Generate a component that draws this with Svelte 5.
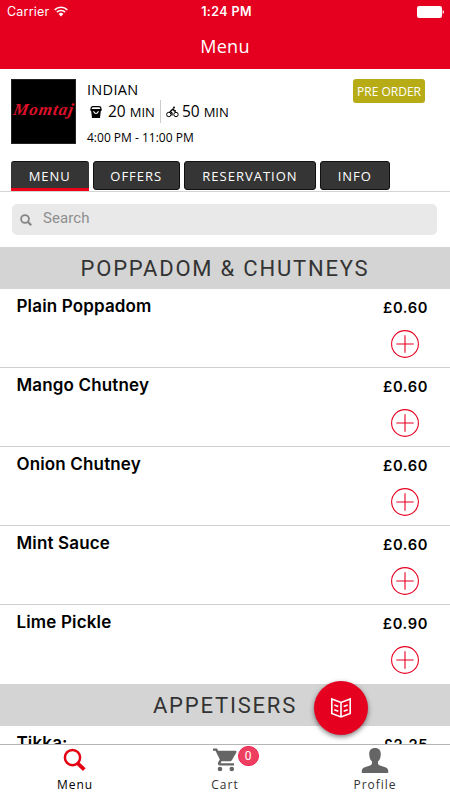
<style>
	:global(body) {
		background: #fff;
		margin: 0;
	}

	.app {
		color: #000;
		display: flex;
		flex-direction: column;
		font-family: "Open Sans", "Noto Sans", sans-serif;
		height: 800px;
		overflow: hidden;
		position: relative;
		width: 450px;
	}

	svg {
		display: block;
	}

	header {
		background: #e50020;
		box-sizing: border-box;
		color: #fff;
		flex: none;
		height: 69px;
	}

	.status {
		align-items: center;
		display: grid;
		font-family: Inter, sans-serif;
		font-size: 12.5px;
		grid-template-columns: 1fr auto 1fr;
		height: 23px;
		padding: 0 6px 0 7px;
	}

	.carrier {
		align-items: center;
		display: flex;
		gap: 5px;
		letter-spacing: 0.2px;
	}

	.clock {
		font-weight: 600;
		letter-spacing: 0.4px;
		padding-left: 2px;
	}

	.battery {
		justify-self: end;
	}

	h1 {
		font-size: 18px;
		font-weight: 400;
		letter-spacing: 0.3px;
		line-height: 24px;
		margin: 11px 0 0;
		text-align: center;
	}

	.restaurant {
		display: flex;
		flex: none;
		height: 82px;
		padding: 10px 25px 0 11px;
	}

	.logo {
		align-items: center;
		background: #000;
		box-shadow: inset 0 0 0 1px #222;
		color: #e0102a;
		display: flex;
		font-family: "Brush Script MT", "Liberation Serif", serif;
		font-size: 17px;
		font-style: italic;
		font-weight: 700;
		height: 65px;
		justify-content: center;
		letter-spacing: 1px;
		line-height: 60px;
		width: 65px;
	}

	.logo span {
		padding-bottom: 3px;
		transform: skewX(-10deg);
	}

	.details {
		flex: 1;
		padding-left: 11px;
	}

	.cuisine {
		font-size: 14.5px;
		letter-spacing: 0.3px;
		line-height: 21px;
	}

	.times {
		align-items: center;
		display: flex;
		font-size: 15.5px;
		height: 23px;
	}

	.times small {
		font-size: 13px;
	}

	.times span {
		margin-top: -1px;
	}

	.collection {
		align-items: center;
		border-right: 1px solid #ccc;
		display: flex;
		gap: 6px;
		height: 23px;
		padding: 0 5px 0 3px;
	}

	.delivery {
		align-items: center;
		display: flex;
		gap: 3px;
		padding-left: 5px;
	}

	.hours {
		font-size: 12px;
		line-height: 16px;
		margin-top: 7px;
	}

	.preorder {
		background: #b7ac16;
		border-radius: 3px;
		color: #fff;
		font-size: 12px;
		height: 24px;
		line-height: 25px;
		text-align: center;
		width: 72px;
	}

	.tabs {
		border-bottom: 1px solid #d4d4d4;
		display: flex;
		flex: none;
		gap: 4px;
		height: 30px;
		padding-left: 11px;
	}

	.tab {
		background: #353535;
		border: 1px solid #111;
		border-radius: 3px;
		box-sizing: border-box;
		color: #fff;
		font-size: 13px;
		height: 29px;
		letter-spacing: 1px;
		line-height: 28px;
		text-align: center;
	}

	.tab.active {
		border-bottom: 3px solid #ee0018;
		border-left: 0;
		border-radius: 3px 3px 0 0;
		border-right: 0;
		height: 30px;
	}

	.search {
		align-items: center;
		background: #e9e9e9;
		border-radius: 5px;
		color: #8e8e8e;
		display: flex;
		flex: none;
		font-family: Roboto, sans-serif;
		font-size: 15px;
		gap: 11px;
		height: 31px;
		letter-spacing: 0.1px;
		margin: 12px 13px 12px 12px;
		padding-left: 8px;
	}

	.search span {
		margin-top: -4px;
	}

	.list {
		flex: 1;
		min-height: 0;
		overflow: hidden;
	}

	h2 {
		background: #d4d4d4;
		color: #333;
		font-family: Roboto, sans-serif;
		font-size: 22px;
		font-weight: 400;
		height: 41.5px;
		letter-spacing: 1.8px;
		line-height: 43px;
		margin: 0;
		text-align: center;
	}

	.item {
		border-bottom: 1px solid #d0d0d0;
		box-sizing: border-box;
		display: flex;
		font-family: Inter, sans-serif;
		height: 79.2px;
		justify-content: space-between;
		padding: 0 22px 0 16.5px;
	}

	.item.last {
		border-bottom: 0;
	}

	.name {
		font-size: 17px;
		font-weight: 600;
		letter-spacing: 0.15px;
		line-height: 34px;
	}

	.buy {
		align-items: flex-end;
		display: flex;
		flex-direction: column;
	}

	.price {
		font-size: 14.7px;
		font-weight: 600;
		letter-spacing: 0.6px;
		line-height: 38px;
	}

	.buy svg {
		margin: 3px 9px 0 0;
	}

	.fab {
		align-items: center;
		background: #e50020;
		border-radius: 50%;
		box-shadow: 0 2px 5px rgba(0, 0, 0, 0.5);
		display: flex;
		height: 54px;
		justify-content: center;
		left: 314px;
		position: absolute;
		top: 681px;
		width: 54px;
	}

	nav {
		background: #fff;
		border-top: 1px solid #b5b5b5;
		box-sizing: border-box;
		display: grid;
		flex: none;
		font-size: 12px;
		grid-template-columns: repeat(3, 1fr);
		height: 56px;
		letter-spacing: 1px;
	}

	.link {
		align-items: center;
		color: #333;
		display: flex;
		flex-direction: column;
		line-height: 16px;
	}

	.link.active {
		color: #000;
	}

	.glyph {
		height: 32px;
		position: relative;
	}

	.badge {
		background: #ef3f60;
		border-radius: 10px;
		box-sizing: border-box;
		border: 1px solid #ee2350;
		color: #fff;
		font-family: Roboto, sans-serif;
		height: 20px;
		left: 24.5px;
		letter-spacing: 0;
		line-height: 18px;
		position: absolute;
		text-align: center;
		top: 0.5px;
		width: 21px;
	}
</style>

<div class="app">
	<header>
		<div class="status">
			<div class="carrier">
				<span>Carrier</span>
				<svg width="14" height="11" viewBox="0 0 14 11" fill="none" stroke="#fff" stroke-width="1.7">
					<path d="M0.7 3.8a9 9 0 0 1 12.6 0M2.9 6.2a5.8 5.8 0 0 1 8.2 0" />
					<path d="M4.6 8a3.5 3.5 0 0 1 4.8 0L7 10.5Z" fill="#fff" stroke="none" />
				</svg>
			</div>
			<span class="clock">1:24 PM</span>
			<svg class="battery" width="27" height="12" viewBox="0 0 27 12" fill="#fff">
				<rect width="25" height="12" rx="2" />
				<path d="M25.7 4q1.3.5 1.3 2t-1.3 2z" />
			</svg>
		</div>
		<h1>Menu</h1>
	</header>

	<div class="restaurant">
		<div class="logo"><span>Momtaj</span></div>
		<div class="details">
			<div class="cuisine">INDIAN</div>
			<div class="times">
				<div class="collection">
					<svg width="12" height="12" viewBox="0 0 12 12">
						<path d="M1 3.5Q1 .7 3 .7h6q2 0 2 2.8" fill="none" stroke="#000" stroke-width="1.2" />
						<path d="M.5 3h11v2h-.7L10 12H2L1.2 5H.5z" />
						<path d="M3.5 5.2q2.5 4.6 5 0" fill="none" stroke="#fff" stroke-width="1.1" />
					</svg>
					<span>20 <small>MIN</small></span>
				</div>
				<div class="delivery">
					<svg width="13" height="12" viewBox="0 0 13 12" fill="none" stroke="#000">
						<circle cx="2.8" cy="8.5" r="2.2" />
						<circle cx="10" cy="8.5" r="2.2" />
						<path d="M6 9.5V7L4.2 5.5 7 3l1.5 2H10" stroke-width="1.3" />
						<circle cx="8" cy="1.5" r="1" fill="#000" stroke="none" />
					</svg>
					<span>50 <small>MIN</small></span>
				</div>
			</div>
			<div class="hours">4:00 PM - 11:00 PM</div>
		</div>
		<div class="preorder">PRE ORDER</div>
	</div>

	<div class="tabs">
		{#each tabs as tab, i}
			<div class="tab" class:active={i === 0} style="width: {tab.width}px">{tab.label}</div>
		{/each}
	</div>

	<div class="search">
		<svg width="12" height="12" viewBox="0 0 12 12" fill="none" stroke="#858585" stroke-width="1.8">
			<circle cx="5" cy="5" r="3.9" />
			<path d="M7.8 7.800l3.400 3.400" stroke-width="2.200" />
		</svg>
		<span>Search</span>
	</div>

	<div class="list">
		{#each sections as section}
			<h2>{section.title}</h2>
			{#each section.items as item, i}
				<div class="item" class:last={i === section.items.length - 1}>
					<span class="name">{item.name}</span>
					<div class="buy">
						<span class="price">£{item.price}</span>
						<svg width="28" height="28" viewBox="0 0 28 28" fill="none" stroke="#e50020" stroke-width="1.1">
							<circle cx="14" cy="14" r="13.4" />
							<path d="M14 5.3v17.4M5.3 14h17.4" />
						</svg>
					</div>
				</div>
			{/each}
		{/each}
	</div>

	<nav>
		<div class="link active">
			<div class="glyph">
				<svg width="24" height="32" viewBox="0 0 24 32" fill="none" stroke="#e50012">
					<circle cx="9.500" cy="12.600" r="7.600" stroke-width="2.500" />
					<path d="M14.500 18.200l6.800 6.500" stroke-width="3.800" />
				</svg>
			</div>
			<span>Menu</span>
		</div>
		<div class="link">
			<div class="glyph">
				<svg width="24" height="32" viewBox="0 0 24 32" fill="#656565">
					<path d="M0 3.5h4l1.200 2.300H22.500q1.400.2.800 1.600L19 15q-.8 1.200-2 1.200H8.500l-1 2H21v2.300H7q-3-.5-1.800-3.200l1.600-2.900L2.500 5.800H0z" />
					<circle cx="7" cy="24" r="2.300" />
					<circle cx="18.800" cy="24" r="2.300" />
				</svg>
				<span class="badge">0</span>
			</div>
			<span>Cart</span>
		</div>
		<div class="link">
			<div class="glyph">
				<svg width="28" height="32" viewBox="0 0 28 32" fill="#656565">
					<path d="M14 3c4.500 0 6.200 3 5.700 7-.1 3.500-1.500 5.500-2.700 6.500v2.500q1 1.600 5 2.500 5 1.200 5.200 4V28H.8v-2.500q.2-2.800 5.200-4 4-.9 5-2.500v-2.500C9.800 15.500 8.400 13.500 8.300 10 7.800 6 9.500 3 14 3z" />
				</svg>
			</div>
			<span>Profile</span>
		</div>
	</nav>

	<div class="fab">
		<svg width="20" height="20" viewBox="0 0 20 20" fill="none" stroke="#fff" stroke-width="1.600">
			<path d="M.8 1L10 4.500 19.200 1v14.500L10 19 .8 15.500zM10 4.500V19" />
			<path d="M3.300 7l4 1.500M3.300 11.800l4 1.500M16.700 7l-4 1.500M16.700 11.800l-4 1.500" />
		</svg>
	</div>
</div>

<script>
	const tabs = [
		{ label: 'MENU', width: 77.5 },
		{ label: 'OFFERS', width: 87.5 },
		{ label: 'RESERVATION', width: 132 },
		{ label: 'INFO', width: 69.5 },
	];

	const sections = [
		{
			title: 'POPPADOM & CHUTNEYS',
			items: [
				{ name: 'Plain Poppadom', price: '0.60' },
				{ name: 'Mango Chutney', price: '0.60' },
				{ name: 'Onion Chutney', price: '0.60' },
				{ name: 'Mint Sauce', price: '0.60' },
				{ name: 'Lime Pickle', price: '0.90' },
			],
		},
		{
			title: 'APPETISERS',
			items: [
				{ name: 'Tikka:', price: '2.25' },
			],
		},
	];
</script>
